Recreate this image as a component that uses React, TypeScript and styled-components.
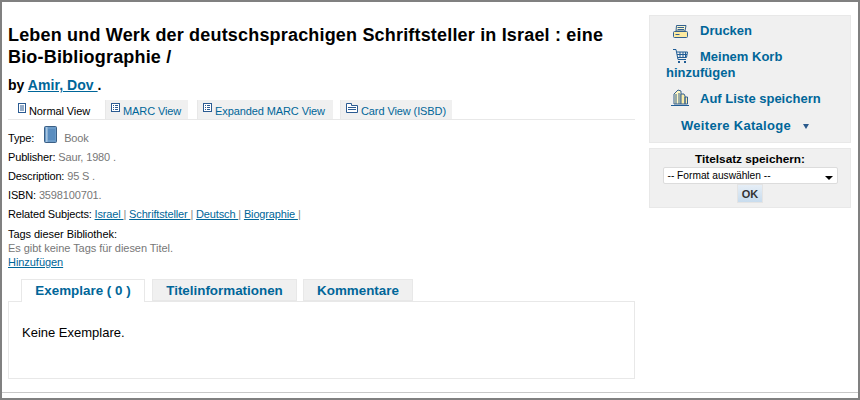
import React from "react";
import styled, { createGlobalStyle } from "styled-components";

const Global = createGlobalStyle`
  html, body { margin: 0; padding: 0; background: #fff; }
  body { font-family: "Liberation Sans", Arial, sans-serif; }
`;

const Frame = styled.div`
  box-sizing: border-box;
  width: 860px;
  height: 400px;
  border: 2px solid #808080;
  background: #fff;
  display: flex;
  flex-direction: column;
  overflow: hidden;
`;
const Body = styled.div`
  flex: 1;
  display: flex;
  gap: 14px;
  padding: 13px 7px 0 6px;
  border-bottom: 1px solid #c8c8c8;
  margin-bottom: 5px;
`;
const Main = styled.main`
  width: 627px;
  flex: none;
`;
const Title = styled.h1`
  margin: 9px 0 0;
  font-size: 18px;
  line-height: 22px;
  font-weight: bold;
  letter-spacing: 0.18px;
  color: #000;
`;
const Byline = styled.div`
  margin-top: 8px;
  font-size: 14px;
  line-height: 18px;
  font-weight: bold;
  letter-spacing: 0.05px;
  color: #000;
`;
const BylineLink = styled.a`
  color: #006699;
  text-decoration: underline;
`;
const ViewTabs = styled.div`
  display: flex;
  margin-top: 6px;
  height: 19px;
  border-bottom: 1px solid #e8e8e8;
`;
const ViewTab = styled.a<{ $active?: boolean; $w: number; $gap: number }>`
  box-sizing: border-box;
  width: ${(p) => p.$w}px;
  margin-right: ${(p) => p.$gap}px;
  height: 19px;
  display: flex;
  align-items: flex-start;
  gap: 3px;
  padding: 3px 0 0 ${(p) => (p.$active ? 9 : 5)}px;
  border-left: 1px solid ${(p) => (p.$active ? "#fff" : "#e8e8e8")};
  font-size: 11px;
  line-height: 16px;
  letter-spacing: -0.1px;
  background: ${(p) => (p.$active ? "#fff" : "#f0f0f0")};
  color: ${(p) => (p.$active ? "#000" : "#006699")};
  white-space: nowrap;
  svg { flex: none; }
`;
const Meta = styled.div`
  font-size: 11px;
  letter-spacing: -0.15px;
  color: #333;
`;
const Row = styled.div`
  display: flex;
  align-items: center;
  height: 19px;
  white-space: pre;
  color: #000;
`;
const TypeRow = styled(Row)`
  height: 21px;
  margin-top: 7px;
  margin-bottom: -1px;
`;
const Muted = styled.span`
  color: #777;
`;
const BookWrap = styled.span`
  display: inline-flex;
  margin: 0 7px 6px 10px;
`;
const Sep = styled.span`
  color: #888;
`;
const SmallLink = styled.a`
  color: #006699;
  text-decoration: underline;
`;
const Tags = styled.div`
  margin-top: 4px;
  line-height: 14px;
  letter-spacing: -0.05px;
  color: #000;
`;
const TagsMuted = styled.div`
  color: #777;
`;
const BottomTabs = styled.div`
  display: flex;
  margin: 10px 0 0 13px;
  height: 23px;
  position: relative;
  z-index: 1;
`;
const BottomTab = styled.a<{ $active?: boolean; $w: number; $gap: number }>`
  box-sizing: border-box;
  width: ${(p) => p.$w}px;
  margin-right: ${(p) => p.$gap}px;
  height: ${(p) => (p.$active ? 23 : 22)}px;
  border: 1px solid #e8e8e8;
  border-bottom: ${(p) => (p.$active ? "none" : "1px solid #e8e8e8")};
  background: ${(p) => (p.$active ? "#fff" : "#f0f0f0")};
  color: #006699;
  font-size: 13.4px;
  font-weight: bold;
  line-height: 21px;
  text-align: center;
`;
const Panel = styled.div`
  box-sizing: border-box;
  height: 78px;
  margin-top: -1px;
  border: 1px solid #e8e8e8;
  padding: 22px 13px;
  font-size: 13px;
  line-height: 17px;
  color: #000;
`;
const Side = styled.aside`
  width: 202px;
  flex: none;
  display: flex;
  flex-direction: column;
  gap: 5px;
`;
const ActionBox = styled.div`
  box-sizing: border-box;
  height: 128px;
  background: #f0f0f0;
  border: 1px solid #e8e8e8;
  padding: 2px 0 0 16px;
  color: #006699;
  font-size: 13px;
  font-weight: bold;
`;
const ActionRow = styled.a<{ $top: number }>`
  display: block;
  margin-top: ${(p) => p.$top}px;
  line-height: 16px;
  svg { vertical-align: -3px; }
`;
const IconSlot = styled.span<{ $pad: number }>`
  display: inline-block;
  width: 34px;
  padding-left: ${(p) => p.$pad}px;
  box-sizing: border-box;
`;
const MoreRow = styled.div`
  display: flex;
  align-items: center;
  gap: 12px;
  margin: 11px 0 0 15px;
  line-height: 16px;
  letter-spacing: 0.3px;
`;
const Tri = styled.span`
  width: 0;
  height: 0;
  border-left: 3px solid transparent;
  border-right: 3px solid transparent;
  border-top: 5px solid #2a5a8c;
`;
const SaveBox = styled.div`
  box-sizing: border-box;
  height: 60px;
  background: #f0f0f0;
  border: 1px solid #e8e8e8;
  display: flex;
  flex-direction: column;
  align-items: center;
  padding-top: 4px;
`;
const SaveLabel = styled.div`
  font-size: 11.8px;
  font-weight: bold;
  line-height: 13px;
  color: #000;
`;
const FakeSelect = styled.div`
  box-sizing: border-box;
  width: 175px;
  height: 17px;
  margin-top: 1px;
  background: #fff;
  border: 1px solid #dcdcdc;
  border-radius: 2px;
  padding-left: 4px;
  display: flex;
  align-items: center;
  justify-content: space-between;
  font-size: 10.2px;
  color: #000;
`;
const SelectArrow = styled.span`
  width: 0;
  height: 0;
  margin: 4px 4px 0 0;
  border-left: 4px solid transparent;
  border-right: 4px solid transparent;
  border-top: 4px solid #000;
`;
const OkButton = styled.button`
  box-sizing: border-box;
  width: 26px;
  height: 19px;
  padding: 0;
  border: 1px solid #e4e4e4;
  background: linear-gradient(#e6eef6, #c8dcee);
  font: bold 11px "Liberation Sans", Arial, sans-serif;
  color: #333;
`;

const NormalIcon = () => (
  <svg width="8" height="10" viewBox="0 0 8 10">
    <rect x="0.5" y="0.5" width="7" height="9" fill="#fff" stroke="#2b5b92" />
    <path d="M2 3h4M2 5h4M2 7h4" stroke="#2b5b92" />
  </svg>
);
const MarcIcon = () => (
  <svg width="9" height="9" viewBox="0 0 9 9">
    <rect x="0.5" y="0.5" width="8" height="8" fill="#fff" stroke="#2b5b92" />
    <path d="M2 2.5h1M4 2.5h3M2 4.5h1M4 4.5h3M2 6.5h1M4 6.5h3" stroke="#2b5b92" />
  </svg>
);
const CardIcon = () => (
  <svg width="12" height="10" viewBox="0 0 12 10">
    <path d="M0.5 9.5V0.5H5.5V2.5H11.5V9.5Z" fill="#fff" stroke="#2b5b92" />
    <path d="M2 4.5h8M2 6.5h8" stroke="#2b5b92" />
  </svg>
);
const BookIcon = () => (
  <svg width="13" height="17" viewBox="0 0 13 17">
    <rect x="0.5" y="0.5" width="12" height="16" rx="1" fill="#6b9bc8" stroke="#3b5f85" />
    <rect x="2" y="1" width="1.5" height="15" fill="#a9c6e0" />
    <rect x="4" y="3" width="7" height="11" fill="#5a8dbf" />
  </svg>
);
const PrintIcon = () => (
  <svg width="15" height="13" viewBox="0 0 15 13">
    <path d="M3.5 .5H13L12 6H3Z" fill="#fbf6cf" stroke="#34618f" />
    <path d="M4.5 2.5H11M4.5 4.5H11" stroke="#34618f" />
    <rect x="0.5" y="6.5" width="14" height="6" rx="1" fill="#fdeaa0" stroke="#34618f" />
    <path d="M2.5 9.5h4" stroke="#34618f" />
  </svg>
);
const CartIcon = () => (
  <svg width="15" height="15" viewBox="0 0 15 15">
    <path d="M0 .5H3L5 10.5H13" fill="none" stroke="#1f5c95" />
    <path d="M4 3h10.5l-1 5.5H5M4 5.5h10M7 3v5.5M10 3v5.5M12.5 3v5.5" fill="none" stroke="#1f5c95" />
    <rect x="5" y="12" width="2" height="2" fill="#1f5c95" />
    <rect x="11" y="12" width="2" height="2" fill="#1f5c95" />
  </svg>
);
const ListIcon = () => (
  <svg width="19" height="17" viewBox="0 0 19 17">
    <path d="M3 15V5l4-4 3 1v13Z" fill="#fff7c4" stroke="#34618f" />
    <path d="M10 15V5h3l1 2v8ZM14 15V8h2.5v7Z" fill="#fdeea8" stroke="#34618f" />
    <path d="M5 5v10M8 4v11" stroke="#34618f" />
    <path d="M0 16.5H18" stroke="#1f5c95" />
  </svg>
);

export default function App() {
  return (
    <Frame>
      <Global />
      <Body>
        <Main>
          <Title>
            Leben und Werk der deutschsprachigen Schriftsteller in Israel : eine
            <br />
            Bio-Bibliographie /
          </Title>
          <Byline>
            by <BylineLink>Amir, Dov </BylineLink>.
          </Byline>
          <ViewTabs>
            <ViewTab $active $w={97} $gap={0}>
              <NormalIcon />
              Normal View
            </ViewTab>
            <ViewTab $w={83} $gap={9}>
              <MarcIcon />
              MARC View
            </ViewTab>
            <ViewTab $w={136} $gap={7}>
              <MarcIcon />
              Expanded MARC View
            </ViewTab>
            <ViewTab $w={112} $gap={0}>
              <CardIcon />
              Card View (ISBD)
            </ViewTab>
          </ViewTabs>
          <Meta>
            <TypeRow>
              Type:
              <BookWrap>
                <BookIcon />
              </BookWrap>
              <Muted>Book</Muted>
            </TypeRow>
            <Row>
              Publisher: <Muted>Saur, 1980 .</Muted>
            </Row>
            <Row>
              Description: <Muted>95 S .</Muted>
            </Row>
            <Row>
              ISBN: <Muted>3598100701.</Muted>
            </Row>
            <Row>
              Related Subjects: <SmallLink>Israel </SmallLink>
              <Sep>| </Sep>
              <SmallLink>Schriftsteller </SmallLink>
              <Sep>| </Sep>
              <SmallLink>Deutsch </SmallLink>
              <Sep>| </Sep>
              <SmallLink>Biographie </SmallLink>
              <Sep>|</Sep>
            </Row>
            <Tags>
              Tags dieser Bibliothek:
              <TagsMuted>Es gibt keine Tags für diesen Titel.</TagsMuted>
              <SmallLink>Hinzufügen</SmallLink>
            </Tags>
          </Meta>
          <BottomTabs>
            <BottomTab $active $w={124} $gap={7}>
              Exemplare ( 0 )
            </BottomTab>
            <BottomTab $w={145} $gap={6}>
              Titelinformationen
            </BottomTab>
            <BottomTab $w={110} $gap={0}>
              Kommentare
            </BottomTab>
          </BottomTabs>
          <Panel>Keine Exemplare.</Panel>
        </Main>
        <Side>
          <ActionBox>
            <ActionRow $top={5}>
              <IconSlot $pad={7}>
                <PrintIcon />
              </IconSlot>
              Drucken
            </ActionRow>
            <ActionRow $top={10}>
              <IconSlot $pad={7}>
                <CartIcon />
              </IconSlot>
              Meinem Korb hinzufügen
            </ActionRow>
            <ActionRow $top={8}>
              <IconSlot $pad={5}>
                <ListIcon />
              </IconSlot>
              Auf Liste speichern
            </ActionRow>
            <MoreRow>
              Weitere Kataloge
              <Tri />
            </MoreRow>
          </ActionBox>
          <SaveBox>
            <SaveLabel>Titelsatz speichern:</SaveLabel>
            <FakeSelect>
              -- Format auswählen --
              <SelectArrow />
            </FakeSelect>
            <OkButton>OK</OkButton>
          </SaveBox>
        </Side>
      </Body>
    </Frame>
  );
}
